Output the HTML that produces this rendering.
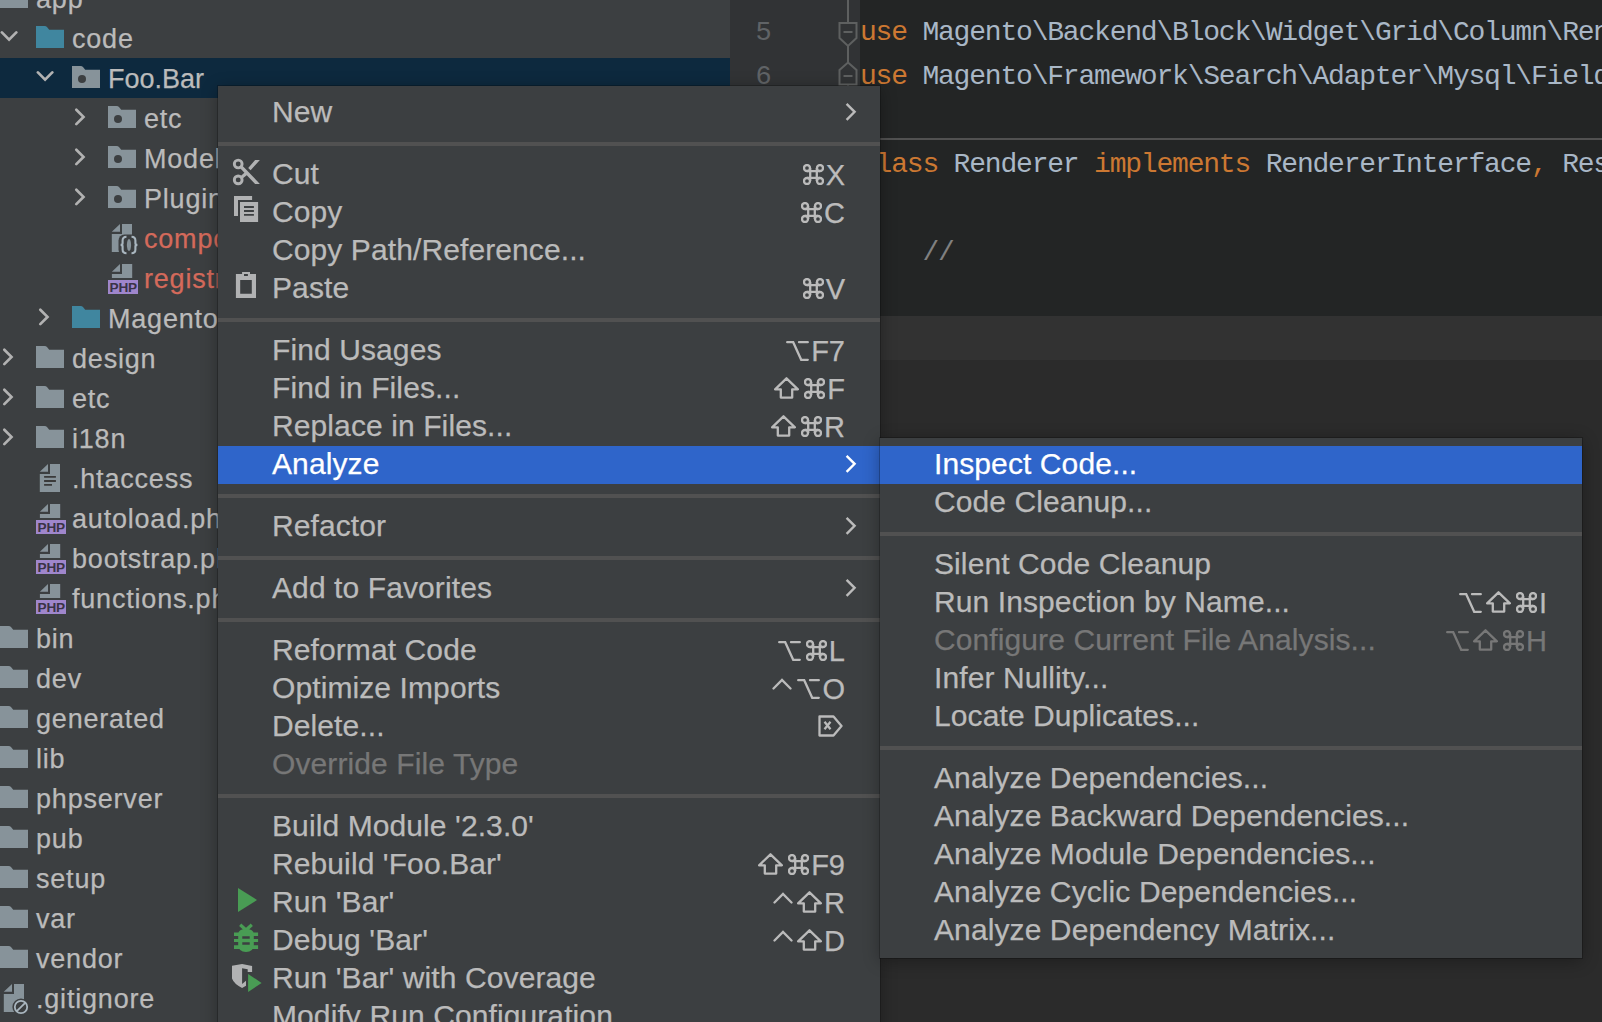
<!DOCTYPE html>
<html><head><meta charset="utf-8"><style>
html,body{margin:0;padding:0}
body{width:1602px;height:1022px;position:relative;overflow:hidden;background:#3C3F41;font-family:"Liberation Sans",sans-serif}
.t{position:absolute;white-space:pre;line-height:1;-webkit-text-stroke:0.25px currentColor}
#tree{position:absolute;left:0;top:0;width:730px;height:1022px;background:#3C3F41;overflow:hidden}
#gutter{position:absolute;left:730px;top:0;width:130px;height:1022px;background:#313335}
#editor{position:absolute;left:860px;top:0;width:742px;height:1022px;background:#2B2B2B;overflow:hidden}
.menu{position:absolute;background:#3C3F41;box-shadow:0 0 0 1px rgba(0,0,0,0.22),0 3px 16px rgba(0,0,0,0.32)}
</style></head><body>
<div id="tree"><div style="position:absolute;left:0;top:58px;width:730px;height:40px;background:#0D293E"></div><svg style="position:absolute;left:0px;top:-14px" width="28" height="22" viewBox="0 0 28 22"><path d="M0 0H8.5Q10.2 0 11.2 1.2L13.2 3.8H28V22H0Z" fill="#87939A"/></svg><div class="t" style="left:36px;top:-13.86px;font-size:27px;color:#BBBBBB;letter-spacing:0.8px;">app</div><svg style="position:absolute;left:0px;top:18px" width="20" height="40" viewBox="0 0 20 40"><path d="M1.9 14.4L9.1 21.6L16.3 14.4" fill="none" stroke="#B2B2B2" stroke-width="2.7" stroke-linecap="round"/></svg><svg style="position:absolute;left:36px;top:26px" width="28" height="22" viewBox="0 0 28 22"><path d="M0 0H8.5Q10.2 0 11.2 1.2L13.2 3.8H28V22H0Z" fill="#40869F"/></svg><div class="t" style="left:72px;top:26.14px;font-size:27px;color:#BBBBBB;letter-spacing:0.8px;">code</div><svg style="position:absolute;left:36px;top:58px" width="20" height="40" viewBox="0 0 20 40"><path d="M1.9 14.4L9.1 21.6L16.3 14.4" fill="none" stroke="#B2B2B2" stroke-width="2.7" stroke-linecap="round"/></svg><svg style="position:absolute;left:72px;top:66px" width="28" height="22" viewBox="0 0 28 22"><path d="M0 0H8.5Q10.2 0 11.2 1.2L13.2 3.8H28V22H0Z" fill="#87939A"/><circle cx="10" cy="13" r="4" fill="#3C3F41"/></svg><div class="t" style="left:108px;top:66.14px;font-size:27px;color:#BBBBBB;letter-spacing:0px;">Foo.Bar</div><svg style="position:absolute;left:72px;top:98px" width="20" height="40" viewBox="0 0 20 40"><path d="M4.3 11.7L11.5 18.9L4.3 26.1" fill="none" stroke="#B2B2B2" stroke-width="2.7" stroke-linecap="round"/></svg><svg style="position:absolute;left:108px;top:106px" width="28" height="22" viewBox="0 0 28 22"><path d="M0 0H8.5Q10.2 0 11.2 1.2L13.2 3.8H28V22H0Z" fill="#87939A"/><circle cx="10" cy="13" r="4" fill="#3C3F41"/></svg><div class="t" style="left:144px;top:106.14px;font-size:27px;color:#BBBBBB;letter-spacing:0.8px;">etc</div><svg style="position:absolute;left:72px;top:138px" width="20" height="40" viewBox="0 0 20 40"><path d="M4.3 11.7L11.5 18.9L4.3 26.1" fill="none" stroke="#B2B2B2" stroke-width="2.7" stroke-linecap="round"/></svg><svg style="position:absolute;left:108px;top:146px" width="28" height="22" viewBox="0 0 28 22"><path d="M0 0H8.5Q10.2 0 11.2 1.2L13.2 3.8H28V22H0Z" fill="#87939A"/><circle cx="10" cy="13" r="4" fill="#3C3F41"/></svg><div class="t" style="left:144px;top:146.14px;font-size:27px;color:#BBBBBB;letter-spacing:0.8px;">Model</div><svg style="position:absolute;left:72px;top:178px" width="20" height="40" viewBox="0 0 20 40"><path d="M4.3 11.7L11.5 18.9L4.3 26.1" fill="none" stroke="#B2B2B2" stroke-width="2.7" stroke-linecap="round"/></svg><svg style="position:absolute;left:108px;top:186px" width="28" height="22" viewBox="0 0 28 22"><path d="M0 0H8.5Q10.2 0 11.2 1.2L13.2 3.8H28V22H0Z" fill="#87939A"/><circle cx="10" cy="13" r="4" fill="#3C3F41"/></svg><div class="t" style="left:144px;top:186.14px;font-size:27px;color:#BBBBBB;letter-spacing:0.8px;">Plugin</div><svg style="position:absolute;left:108px;top:218px" width="32" height="40" viewBox="0 0 32 40"><path d="M3.8 13.7L12 5.9V13.7Z M14 5.9H24V33.9H3.8V15.9H14Z" fill="#87939A"/><rect x="10.5" y="16.5" width="21" height="21" rx="6" fill="#3C3F41"/><path d="M18.5 18.8Q14.6 18.8 14.6 22.5V25.2Q14.6 26.9 12.6 26.9Q14.6 26.9 14.6 28.6V31.5Q14.6 35.2 18.5 35.2 M23.5 18.8Q27.4 18.8 27.4 22.5V25.2Q27.4 26.9 29.4 26.9Q27.4 26.9 27.4 28.6V31.5Q27.4 35.2 23.5 35.2" fill="none" stroke="#A9B6BF" stroke-width="2.1"/><ellipse cx="21" cy="27" rx="3.4" ry="7.4" fill="#3C3F41"/><ellipse cx="21" cy="27" rx="2.1" ry="6" fill="#87939A"/></svg><div class="t" style="left:144px;top:226.14px;font-size:27px;color:#D46A5B;letter-spacing:0.8px;">composer.json</div><svg style="position:absolute;left:108px;top:258px" width="32" height="40" viewBox="0 0 32 40"><path d="M3.9 13.7L12 6V13.7Z M14 6H24.2V19.9H3.9V15.9H14Z" fill="#87939A"/><rect x="0" y="22" width="30" height="14" fill="#9F86CC"/><text x="1.6" y="33.8" font-family="Liberation Sans" font-weight="bold" font-size="13.6" letter-spacing="-0.2" fill="#3A3346">PHP</text></svg><div class="t" style="left:144px;top:266.14px;font-size:27px;color:#D46A5B;letter-spacing:0.8px;">registration.php</div><svg style="position:absolute;left:36px;top:298px" width="20" height="40" viewBox="0 0 20 40"><path d="M4.3 11.7L11.5 18.9L4.3 26.1" fill="none" stroke="#B2B2B2" stroke-width="2.7" stroke-linecap="round"/></svg><svg style="position:absolute;left:72px;top:306px" width="28" height="22" viewBox="0 0 28 22"><path d="M0 0H8.5Q10.2 0 11.2 1.2L13.2 3.8H28V22H0Z" fill="#40869F"/></svg><div class="t" style="left:108px;top:306.14px;font-size:27px;color:#BBBBBB;letter-spacing:0.8px;">Magento</div><svg style="position:absolute;left:0px;top:338px" width="20" height="40" viewBox="0 0 20 40"><path d="M4.3 11.7L11.5 18.9L4.3 26.1" fill="none" stroke="#B2B2B2" stroke-width="2.7" stroke-linecap="round"/></svg><svg style="position:absolute;left:36px;top:346px" width="28" height="22" viewBox="0 0 28 22"><path d="M0 0H8.5Q10.2 0 11.2 1.2L13.2 3.8H28V22H0Z" fill="#87939A"/></svg><div class="t" style="left:72px;top:346.14px;font-size:27px;color:#BBBBBB;letter-spacing:0.8px;">design</div><svg style="position:absolute;left:0px;top:378px" width="20" height="40" viewBox="0 0 20 40"><path d="M4.3 11.7L11.5 18.9L4.3 26.1" fill="none" stroke="#B2B2B2" stroke-width="2.7" stroke-linecap="round"/></svg><svg style="position:absolute;left:36px;top:386px" width="28" height="22" viewBox="0 0 28 22"><path d="M0 0H8.5Q10.2 0 11.2 1.2L13.2 3.8H28V22H0Z" fill="#87939A"/></svg><div class="t" style="left:72px;top:386.14px;font-size:27px;color:#BBBBBB;letter-spacing:0.8px;">etc</div><svg style="position:absolute;left:0px;top:418px" width="20" height="40" viewBox="0 0 20 40"><path d="M4.3 11.7L11.5 18.9L4.3 26.1" fill="none" stroke="#B2B2B2" stroke-width="2.7" stroke-linecap="round"/></svg><svg style="position:absolute;left:36px;top:426px" width="28" height="22" viewBox="0 0 28 22"><path d="M0 0H8.5Q10.2 0 11.2 1.2L13.2 3.8H28V22H0Z" fill="#87939A"/></svg><div class="t" style="left:72px;top:426.14px;font-size:27px;color:#BBBBBB;letter-spacing:0.8px;">i18n</div><svg style="position:absolute;left:36px;top:458px" width="32" height="40" viewBox="0 0 32 40"><path d="M3.8 13.7L12 5.9V13.7Z M14 5.9H24V33.9H3.8V15.9H14Z" fill="#87939A"/><path d="M8.1 18.9H19.9 M8.1 23H19.9 M8.1 26.9H16" stroke="#3A3A3A" stroke-width="1.8"/></svg><div class="t" style="left:72px;top:466.14px;font-size:27px;color:#BBBBBB;letter-spacing:0.8px;">.htaccess</div><svg style="position:absolute;left:36px;top:498px" width="32" height="40" viewBox="0 0 32 40"><path d="M3.9 13.7L12 6V13.7Z M14 6H24.2V19.9H3.9V15.9H14Z" fill="#87939A"/><rect x="0" y="22" width="30" height="14" fill="#9F86CC"/><text x="1.6" y="33.8" font-family="Liberation Sans" font-weight="bold" font-size="13.6" letter-spacing="-0.2" fill="#3A3346">PHP</text></svg><div class="t" style="left:72px;top:506.14px;font-size:27px;color:#BBBBBB;letter-spacing:0.8px;">autoload.php</div><svg style="position:absolute;left:36px;top:538px" width="32" height="40" viewBox="0 0 32 40"><path d="M3.9 13.7L12 6V13.7Z M14 6H24.2V19.9H3.9V15.9H14Z" fill="#87939A"/><rect x="0" y="22" width="30" height="14" fill="#9F86CC"/><text x="1.6" y="33.8" font-family="Liberation Sans" font-weight="bold" font-size="13.6" letter-spacing="-0.2" fill="#3A3346">PHP</text></svg><div class="t" style="left:72px;top:546.14px;font-size:27px;color:#BBBBBB;letter-spacing:0.8px;">bootstrap.php</div><svg style="position:absolute;left:36px;top:578px" width="32" height="40" viewBox="0 0 32 40"><path d="M3.9 13.7L12 6V13.7Z M14 6H24.2V19.9H3.9V15.9H14Z" fill="#87939A"/><rect x="0" y="22" width="30" height="14" fill="#9F86CC"/><text x="1.6" y="33.8" font-family="Liberation Sans" font-weight="bold" font-size="13.6" letter-spacing="-0.2" fill="#3A3346">PHP</text></svg><div class="t" style="left:72px;top:586.14px;font-size:27px;color:#BBBBBB;letter-spacing:0.8px;">functions.php</div><svg style="position:absolute;left:0px;top:626px" width="28" height="22" viewBox="0 0 28 22"><path d="M0 0H8.5Q10.2 0 11.2 1.2L13.2 3.8H28V22H0Z" fill="#87939A"/></svg><div class="t" style="left:36px;top:626.14px;font-size:27px;color:#BBBBBB;letter-spacing:0.8px;">bin</div><svg style="position:absolute;left:0px;top:666px" width="28" height="22" viewBox="0 0 28 22"><path d="M0 0H8.5Q10.2 0 11.2 1.2L13.2 3.8H28V22H0Z" fill="#87939A"/></svg><div class="t" style="left:36px;top:666.14px;font-size:27px;color:#BBBBBB;letter-spacing:0.8px;">dev</div><svg style="position:absolute;left:0px;top:706px" width="28" height="22" viewBox="0 0 28 22"><path d="M0 0H8.5Q10.2 0 11.2 1.2L13.2 3.8H28V22H0Z" fill="#87939A"/></svg><div class="t" style="left:36px;top:706.14px;font-size:27px;color:#BBBBBB;letter-spacing:0.8px;">generated</div><svg style="position:absolute;left:0px;top:746px" width="28" height="22" viewBox="0 0 28 22"><path d="M0 0H8.5Q10.2 0 11.2 1.2L13.2 3.8H28V22H0Z" fill="#87939A"/></svg><div class="t" style="left:36px;top:746.14px;font-size:27px;color:#BBBBBB;letter-spacing:0.8px;">lib</div><svg style="position:absolute;left:0px;top:786px" width="28" height="22" viewBox="0 0 28 22"><path d="M0 0H8.5Q10.2 0 11.2 1.2L13.2 3.8H28V22H0Z" fill="#87939A"/></svg><div class="t" style="left:36px;top:786.14px;font-size:27px;color:#BBBBBB;letter-spacing:0.8px;">phpserver</div><svg style="position:absolute;left:0px;top:826px" width="28" height="22" viewBox="0 0 28 22"><path d="M0 0H8.5Q10.2 0 11.2 1.2L13.2 3.8H28V22H0Z" fill="#87939A"/></svg><div class="t" style="left:36px;top:826.14px;font-size:27px;color:#BBBBBB;letter-spacing:0.8px;">pub</div><svg style="position:absolute;left:0px;top:866px" width="28" height="22" viewBox="0 0 28 22"><path d="M0 0H8.5Q10.2 0 11.2 1.2L13.2 3.8H28V22H0Z" fill="#87939A"/></svg><div class="t" style="left:36px;top:866.14px;font-size:27px;color:#BBBBBB;letter-spacing:0.8px;">setup</div><svg style="position:absolute;left:0px;top:906px" width="28" height="22" viewBox="0 0 28 22"><path d="M0 0H8.5Q10.2 0 11.2 1.2L13.2 3.8H28V22H0Z" fill="#87939A"/></svg><div class="t" style="left:36px;top:906.14px;font-size:27px;color:#BBBBBB;letter-spacing:0.8px;">var</div><svg style="position:absolute;left:0px;top:946px" width="28" height="22" viewBox="0 0 28 22"><path d="M0 0H8.5Q10.2 0 11.2 1.2L13.2 3.8H28V22H0Z" fill="#87939A"/></svg><div class="t" style="left:36px;top:946.14px;font-size:27px;color:#BBBBBB;letter-spacing:0.8px;">vendor</div><svg style="position:absolute;left:0px;top:978px" width="32" height="40" viewBox="0 0 32 40"><path d="M3.8 13.7L12 5.9V13.7Z M14 5.9H24V33.9H3.8V15.9H14Z" fill="#87939A"/><circle cx="21" cy="29" r="8.6" fill="#3C3F41"/><circle cx="21" cy="29" r="6.2" fill="none" stroke="#A9B6BF" stroke-width="1.8"/><path d="M16.8 33.2L25.2 24.8" stroke="#A9B6BF" stroke-width="1.8"/></svg><div class="t" style="left:36px;top:986.14px;font-size:27px;color:#BBBBBB;letter-spacing:0.8px;">.gitignore</div></div><div id="gutter"></div><div id="editor"><div style="position:absolute;left:0;top:0;width:742px;height:316px;background:#232525"></div><div style="position:absolute;left:0;top:316px;width:742px;height:44px;background:#323232"></div><div style="position:absolute;left:0;top:138px;width:742px;height:2px;background:#515151"></div></div><div class="t" style="left:860px;top:18.54px;font-size:28px;color:#A9B7C6;letter-spacing:-1.2px;font-family:'Liberation Mono', monospace;-webkit-text-stroke:0;"><span style="color:#CC7832">use</span> Magento\Backend\Block\Widget\Grid\Column\Renderer\AbstractRenderer;</div><div class="t" style="left:860px;top:62.54px;font-size:28px;color:#A9B7C6;letter-spacing:-1.2px;font-family:'Liberation Mono', monospace;-webkit-text-stroke:0;"><span style="color:#CC7832">use</span> Magento\Framework\Search\Adapter\Mysql\Field\Resolver;</div><div class="t" style="left:860px;top:150.54px;font-size:28px;color:#A9B7C6;letter-spacing:-1.2px;font-family:'Liberation Mono', monospace;-webkit-text-stroke:0;"><span style="color:#CC7832">class</span> Renderer <span style="color:#CC7832">implements</span> RendererInterface<span style="color:#CC7832">,</span> ResolverInterface</div><div class="t" style="left:860px;top:238.54px;font-size:28px;color:#A9B7C6;letter-spacing:-1.2px;font-family:'Liberation Mono', monospace;-webkit-text-stroke:0;">    <span style="color:#808080">//</span></div><div class="t" style="left:755.5px;top:19.80px;font-size:27px;color:#606366;letter-spacing:0px;font-family:'Liberation Mono', monospace;-webkit-text-stroke:0;">5</div><div class="t" style="left:755.5px;top:63.80px;font-size:27px;color:#606366;letter-spacing:0px;font-family:'Liberation Mono', monospace;-webkit-text-stroke:0;">6</div><svg style="position:absolute;left:836px;top:0px" width="24" height="86" viewBox="0 0 24 86"><path d="M12 0V23 M3.5 23H20.5V38L12 46L3.5 38Z M12 46V62.5 M12 62.5L20.5 70V84.5H3.5V70Z M12 84.5V86" fill="none" stroke="#5E6060" stroke-width="2"/><path d="M7.5 32H16.5 M7.5 76H16.5" stroke="#5E6060" stroke-width="2"/></svg><div class="menu" style="left:218px;top:86px;width:662px;height:956px"></div><div class="t" style="left:272px;top:96.61px;font-size:30px;color:#BBBBBB;letter-spacing:0.1px;">New</div><svg style="position:absolute;left:845px;top:102px" width="12" height="20" viewBox="0 0 12 20"><path d="M1.6 1.8L9.6 9.8L1.6 17.8" fill="none" stroke="#BBBBBB" stroke-width="2.4"/></svg><div style="position:absolute;left:218px;top:142px;width:662px;height:4px;background:#515151"></div><svg style="position:absolute;left:228px;top:154px" width="36" height="36" viewBox="0 0 36 36"><g fill="none" stroke="#B1B2B3" stroke-width="2.9"><circle cx="10.2" cy="10" r="3.9"/><circle cx="10.2" cy="25.9" r="3.9"/></g><path d="M14.2 11.6L31.9 29.9H27.1L12.4 14.6Z M27.1 6H31.9L22.6 16.3L20.2 13.9Z M12.6 22.3L16.6 18.5L19 20.9L14.6 24.5Z" fill="#B1B2B3"/></svg><div class="t" style="left:272px;top:158.60px;font-size:30px;color:#BBBBBB;letter-spacing:0.1px;">Cut</div><div style="position:absolute;right:757px;top:164px;height:21px;display:flex;flex-direction:row;color:#BBBBBB"><span style="margin-left:5px;align-self:flex-end;margin-bottom:0px"><svg width="21" height="21" viewBox="0 0 21 21" style="display:block"><g fill="none" stroke="#BBBBBB" stroke-width="2.3"><circle cx="4" cy="4" r="3"/><circle cx="17" cy="4" r="3"/><circle cx="4" cy="17" r="3"/><circle cx="17" cy="17" r="3"/><path d="M7.2 4V17 M13.8 4V17 M4 7.2H17 M4 13.8H17"/></g></svg></span><span style="margin-left:2px;font-size:29px;line-height:20px;height:20px;display:block;align-self:flex-end;-webkit-text-stroke:0.25px currentColor">X</span></div><svg style="position:absolute;left:228px;top:192px" width="36" height="36" viewBox="0 0 36 36"><path d="M6 3.9H24.1V7.9H10V24H6Z M12 9.9H30.1V30.1H12Z" fill="#B1B2B3"/><path d="M16 15H25.9 M16 19H25.9 M16 22.9H25.9" stroke="#3C3F41" stroke-width="1.8"/></svg><div class="t" style="left:272px;top:196.60px;font-size:30px;color:#BBBBBB;letter-spacing:0.1px;">Copy</div><div style="position:absolute;right:757px;top:202px;height:21px;display:flex;flex-direction:row;color:#BBBBBB"><span style="margin-left:5px;align-self:flex-end;margin-bottom:0px"><svg width="21" height="21" viewBox="0 0 21 21" style="display:block"><g fill="none" stroke="#BBBBBB" stroke-width="2.3"><circle cx="4" cy="4" r="3"/><circle cx="17" cy="4" r="3"/><circle cx="4" cy="17" r="3"/><circle cx="17" cy="17" r="3"/><path d="M7.2 4V17 M13.8 4V17 M4 7.2H17 M4 13.8H17"/></g></svg></span><span style="margin-left:2px;font-size:29px;line-height:20px;height:20px;display:block;align-self:flex-end;-webkit-text-stroke:0.25px currentColor">C</span></div><div class="t" style="left:272px;top:234.60px;font-size:30px;color:#BBBBBB;letter-spacing:0.1px;">Copy Path/Reference...</div><svg style="position:absolute;left:228px;top:266px" width="36" height="36" viewBox="0 0 36 36"><path d="M7.9 7.9H14.1V6H22V7.9H28V32H7.9Z" fill="#B1B2B3"/><path d="M12.2 14.1H23.8V27.8H12.2Z M16 8.1H19.9V9.9H16Z" fill="#3C3F41"/></svg><div class="t" style="left:272px;top:272.61px;font-size:30px;color:#BBBBBB;letter-spacing:0.1px;">Paste</div><div style="position:absolute;right:757px;top:278px;height:21px;display:flex;flex-direction:row;color:#BBBBBB"><span style="margin-left:5px;align-self:flex-end;margin-bottom:0px"><svg width="21" height="21" viewBox="0 0 21 21" style="display:block"><g fill="none" stroke="#BBBBBB" stroke-width="2.3"><circle cx="4" cy="4" r="3"/><circle cx="17" cy="4" r="3"/><circle cx="4" cy="17" r="3"/><circle cx="17" cy="17" r="3"/><path d="M7.2 4V17 M13.8 4V17 M4 7.2H17 M4 13.8H17"/></g></svg></span><span style="margin-left:2px;font-size:29px;line-height:20px;height:20px;display:block;align-self:flex-end;-webkit-text-stroke:0.25px currentColor">V</span></div><div style="position:absolute;left:218px;top:318px;width:662px;height:4px;background:#515151"></div><div class="t" style="left:272px;top:334.61px;font-size:30px;color:#BBBBBB;letter-spacing:0.1px;">Find Usages</div><div style="position:absolute;right:757px;top:340px;height:21px;display:flex;flex-direction:row;color:#BBBBBB"><span style="margin-left:5px;align-self:flex-end"><svg width="23" height="20" viewBox="0 0 23 20" style="display:block"><path d="M1.2 1.2H7.2L15.2 18.8H21.8 M13 1.2H21.8" fill="none" stroke="#BBBBBB" stroke-width="2.3" stroke-linecap="round"/></svg></span><span style="margin-left:2px;font-size:29px;line-height:20px;height:20px;display:block;align-self:flex-end;-webkit-text-stroke:0.25px currentColor">F7</span></div><div class="t" style="left:272px;top:372.61px;font-size:30px;color:#BBBBBB;letter-spacing:0.1px;">Find in Files...</div><div style="position:absolute;right:757px;top:378px;height:21px;display:flex;flex-direction:row;color:#BBBBBB"><span style="margin-left:4px;align-self:flex-end"><svg width="25" height="22" viewBox="0 0 25 22" style="display:block"><path d="M12.5 1.3L23.9 12.3H18.2V20.6H6.8V12.3H1.1Z" fill="none" stroke="#BBBBBB" stroke-width="2.3" stroke-linejoin="round"/></svg></span><span style="margin-left:5px;align-self:flex-end;margin-bottom:0px"><svg width="21" height="21" viewBox="0 0 21 21" style="display:block"><g fill="none" stroke="#BBBBBB" stroke-width="2.3"><circle cx="4" cy="4" r="3"/><circle cx="17" cy="4" r="3"/><circle cx="4" cy="17" r="3"/><circle cx="17" cy="17" r="3"/><path d="M7.2 4V17 M13.8 4V17 M4 7.2H17 M4 13.8H17"/></g></svg></span><span style="margin-left:2px;font-size:29px;line-height:20px;height:20px;display:block;align-self:flex-end;-webkit-text-stroke:0.25px currentColor">F</span></div><div class="t" style="left:272px;top:410.61px;font-size:30px;color:#BBBBBB;letter-spacing:0.1px;">Replace in Files...</div><div style="position:absolute;right:757px;top:416px;height:21px;display:flex;flex-direction:row;color:#BBBBBB"><span style="margin-left:4px;align-self:flex-end"><svg width="25" height="22" viewBox="0 0 25 22" style="display:block"><path d="M12.5 1.3L23.9 12.3H18.2V20.6H6.8V12.3H1.1Z" fill="none" stroke="#BBBBBB" stroke-width="2.3" stroke-linejoin="round"/></svg></span><span style="margin-left:5px;align-self:flex-end;margin-bottom:0px"><svg width="21" height="21" viewBox="0 0 21 21" style="display:block"><g fill="none" stroke="#BBBBBB" stroke-width="2.3"><circle cx="4" cy="4" r="3"/><circle cx="17" cy="4" r="3"/><circle cx="4" cy="17" r="3"/><circle cx="17" cy="17" r="3"/><path d="M7.2 4V17 M13.8 4V17 M4 7.2H17 M4 13.8H17"/></g></svg></span><span style="margin-left:2px;font-size:29px;line-height:20px;height:20px;display:block;align-self:flex-end;-webkit-text-stroke:0.25px currentColor">R</span></div><div style="position:absolute;left:218px;top:446px;width:662px;height:38px;background:#2F65CA"></div><div class="t" style="left:272px;top:448.61px;font-size:30px;color:#FFFFFF;letter-spacing:0.1px;">Analyze</div><svg style="position:absolute;left:845px;top:454px" width="12" height="20" viewBox="0 0 12 20"><path d="M1.6 1.8L9.6 9.8L1.6 17.8" fill="none" stroke="#FFFFFF" stroke-width="2.4"/></svg><div style="position:absolute;left:218px;top:494px;width:662px;height:4px;background:#515151"></div><div class="t" style="left:272px;top:510.61px;font-size:30px;color:#BBBBBB;letter-spacing:0.1px;">Refactor</div><svg style="position:absolute;left:845px;top:516px" width="12" height="20" viewBox="0 0 12 20"><path d="M1.6 1.8L9.6 9.8L1.6 17.8" fill="none" stroke="#BBBBBB" stroke-width="2.4"/></svg><div style="position:absolute;left:218px;top:556px;width:662px;height:4px;background:#515151"></div><div class="t" style="left:272px;top:572.61px;font-size:30px;color:#BBBBBB;letter-spacing:0.1px;">Add to Favorites</div><svg style="position:absolute;left:845px;top:578px" width="12" height="20" viewBox="0 0 12 20"><path d="M1.6 1.8L9.6 9.8L1.6 17.8" fill="none" stroke="#BBBBBB" stroke-width="2.4"/></svg><div style="position:absolute;left:218px;top:618px;width:662px;height:4px;background:#515151"></div><div class="t" style="left:272px;top:634.61px;font-size:30px;color:#BBBBBB;letter-spacing:0.1px;">Reformat Code</div><div style="position:absolute;right:757px;top:640px;height:21px;display:flex;flex-direction:row;color:#BBBBBB"><span style="margin-left:5px;align-self:flex-end"><svg width="23" height="20" viewBox="0 0 23 20" style="display:block"><path d="M1.2 1.2H7.2L15.2 18.8H21.8 M13 1.2H21.8" fill="none" stroke="#BBBBBB" stroke-width="2.3" stroke-linecap="round"/></svg></span><span style="margin-left:5px;align-self:flex-end;margin-bottom:0px"><svg width="21" height="21" viewBox="0 0 21 21" style="display:block"><g fill="none" stroke="#BBBBBB" stroke-width="2.3"><circle cx="4" cy="4" r="3"/><circle cx="17" cy="4" r="3"/><circle cx="4" cy="17" r="3"/><circle cx="17" cy="17" r="3"/><path d="M7.2 4V17 M13.8 4V17 M4 7.2H17 M4 13.8H17"/></g></svg></span><span style="margin-left:2px;font-size:29px;line-height:20px;height:20px;display:block;align-self:flex-end;-webkit-text-stroke:0.25px currentColor">L</span></div><div class="t" style="left:272px;top:672.61px;font-size:30px;color:#BBBBBB;letter-spacing:0.1px;">Optimize Imports</div><div style="position:absolute;right:757px;top:678px;height:21px;display:flex;flex-direction:row;color:#BBBBBB"><span style="margin-left:5px;align-self:flex-start;margin-top:0px"><svg width="20" height="12" viewBox="0 0 20 12" style="display:block"><path d="M1.5 10.5L10 2L18.5 10.5" fill="none" stroke="#BBBBBB" stroke-width="2.3" stroke-linecap="round"/></svg></span><span style="margin-left:5px;align-self:flex-end"><svg width="23" height="20" viewBox="0 0 23 20" style="display:block"><path d="M1.2 1.2H7.2L15.2 18.8H21.8 M13 1.2H21.8" fill="none" stroke="#BBBBBB" stroke-width="2.3" stroke-linecap="round"/></svg></span><span style="margin-left:2px;font-size:29px;line-height:20px;height:20px;display:block;align-self:flex-end;-webkit-text-stroke:0.25px currentColor">O</span></div><div class="t" style="left:272px;top:710.61px;font-size:30px;color:#BBBBBB;letter-spacing:0.1px;">Delete...</div><div style="position:absolute;right:757px;top:716px;height:21px;display:flex;flex-direction:row;color:#BBBBBB"><span style="margin-left:5px;margin-right:2px;align-self:flex-end"><svg width="25" height="22" viewBox="0 0 25 22" style="display:block"><path d="M1.5 1.5H15.5L23.5 11L15.5 20.5H1.5Z M6.5 6.8L12.5 14.2 M12.5 6.8L6.5 14.2" fill="none" stroke="#BBBBBB" stroke-width="2.3" stroke-linejoin="round"/></svg></span></div><div class="t" style="left:272px;top:748.61px;font-size:30px;color:#777777;letter-spacing:0.1px;">Override File Type</div><div style="position:absolute;left:218px;top:794px;width:662px;height:4px;background:#515151"></div><div class="t" style="left:272px;top:810.61px;font-size:30px;color:#BBBBBB;letter-spacing:0.1px;">Build Module '2.3.0'</div><div class="t" style="left:272px;top:848.61px;font-size:30px;color:#BBBBBB;letter-spacing:0.1px;">Rebuild 'Foo.Bar'</div><div style="position:absolute;right:757px;top:854px;height:21px;display:flex;flex-direction:row;color:#BBBBBB"><span style="margin-left:4px;align-self:flex-end"><svg width="25" height="22" viewBox="0 0 25 22" style="display:block"><path d="M12.5 1.3L23.9 12.3H18.2V20.6H6.8V12.3H1.1Z" fill="none" stroke="#BBBBBB" stroke-width="2.3" stroke-linejoin="round"/></svg></span><span style="margin-left:5px;align-self:flex-end;margin-bottom:0px"><svg width="21" height="21" viewBox="0 0 21 21" style="display:block"><g fill="none" stroke="#BBBBBB" stroke-width="2.3"><circle cx="4" cy="4" r="3"/><circle cx="17" cy="4" r="3"/><circle cx="4" cy="17" r="3"/><circle cx="17" cy="17" r="3"/><path d="M7.2 4V17 M13.8 4V17 M4 7.2H17 M4 13.8H17"/></g></svg></span><span style="margin-left:2px;font-size:29px;line-height:20px;height:20px;display:block;align-self:flex-end;-webkit-text-stroke:0.25px currentColor">F9</span></div><svg style="position:absolute;left:237px;top:888px" width="21" height="25" viewBox="0 0 21 25"><path d="M1 0L20 12L1 24Z" fill="#499C54"/></svg><div class="t" style="left:272px;top:886.61px;font-size:30px;color:#BBBBBB;letter-spacing:0.1px;">Run 'Bar'</div><div style="position:absolute;right:757px;top:892px;height:21px;display:flex;flex-direction:row;color:#BBBBBB"><span style="margin-left:5px;align-self:flex-start;margin-top:0px"><svg width="20" height="12" viewBox="0 0 20 12" style="display:block"><path d="M1.5 10.5L10 2L18.5 10.5" fill="none" stroke="#BBBBBB" stroke-width="2.3" stroke-linecap="round"/></svg></span><span style="margin-left:4px;align-self:flex-end"><svg width="25" height="22" viewBox="0 0 25 22" style="display:block"><path d="M12.5 1.3L23.9 12.3H18.2V20.6H6.8V12.3H1.1Z" fill="none" stroke="#BBBBBB" stroke-width="2.3" stroke-linejoin="round"/></svg></span><span style="margin-left:2px;font-size:29px;line-height:20px;height:20px;display:block;align-self:flex-end;-webkit-text-stroke:0.25px currentColor">R</span></div><svg style="position:absolute;left:228px;top:920px" width="36" height="36" viewBox="0 0 36 36"><path d="M12.2 4.8L18 10L23.8 4.8" fill="none" stroke="#499C54" stroke-width="3.2"/><path d="M10.2 14Q10.5 9 18 9Q25.5 9 25.8 14V25Q25.5 31.9 18 31.9Q10.5 31.9 10.2 25Z" fill="#499C54"/><path d="M6 12.5H30.1V15.9H6Z M6 19H30.1V22H6Z M6 25.2H30.1V28.9H6Z" fill="#499C54"/><path d="M14.3 16.2H21.7V18.8H14.3Z M14.3 22.2H21.7V24.8H14.3Z" fill="#3C3F41"/></svg><div class="t" style="left:272px;top:924.61px;font-size:30px;color:#BBBBBB;letter-spacing:0.1px;">Debug 'Bar'</div><div style="position:absolute;right:757px;top:930px;height:21px;display:flex;flex-direction:row;color:#BBBBBB"><span style="margin-left:5px;align-self:flex-start;margin-top:0px"><svg width="20" height="12" viewBox="0 0 20 12" style="display:block"><path d="M1.5 10.5L10 2L18.5 10.5" fill="none" stroke="#BBBBBB" stroke-width="2.3" stroke-linecap="round"/></svg></span><span style="margin-left:4px;align-self:flex-end"><svg width="25" height="22" viewBox="0 0 25 22" style="display:block"><path d="M12.5 1.3L23.9 12.3H18.2V20.6H6.8V12.3H1.1Z" fill="none" stroke="#BBBBBB" stroke-width="2.3" stroke-linejoin="round"/></svg></span><span style="margin-left:2px;font-size:29px;line-height:20px;height:20px;display:block;align-self:flex-end;-webkit-text-stroke:0.25px currentColor">D</span></div><svg style="position:absolute;left:228px;top:960px" width="36" height="34" viewBox="0 0 36 34"><path d="M4 5.8L14.1 4L24.1 6V12H19.7V9.3L14.1 8.3V24L18 20.8V25.7L14.1 27.9Q6 24 4 18.5Z" fill="#B1B2B3"/><path d="M20.1 13.9L33.6 22.9L20.1 31.9Z" fill="#499C54"/></svg><div class="t" style="left:272px;top:962.61px;font-size:30px;color:#BBBBBB;letter-spacing:0.1px;">Run 'Bar' with Coverage</div><div class="t" style="left:272px;top:1000.61px;font-size:30px;color:#BBBBBB;letter-spacing:0.1px;">Modify Run Configuration...</div><div class="menu" style="left:880px;top:438px;width:702px;height:520px"></div><div style="position:absolute;left:880px;top:446px;width:702px;height:38px;background:#2F65CA"></div><div class="t" style="left:934px;top:448.61px;font-size:30px;color:#FFFFFF;letter-spacing:0.1px;">Inspect Code...</div><div class="t" style="left:934px;top:486.61px;font-size:30px;color:#BBBBBB;letter-spacing:0.1px;">Code Cleanup...</div><div style="position:absolute;left:880px;top:532px;width:702px;height:4px;background:#515151"></div><div class="t" style="left:934px;top:548.61px;font-size:30px;color:#BBBBBB;letter-spacing:0.1px;">Silent Code Cleanup</div><div class="t" style="left:934px;top:586.61px;font-size:30px;color:#BBBBBB;letter-spacing:0.1px;">Run Inspection by Name...</div><div style="position:absolute;right:55px;top:592px;height:21px;display:flex;flex-direction:row;color:#BBBBBB"><span style="margin-left:5px;align-self:flex-end"><svg width="23" height="20" viewBox="0 0 23 20" style="display:block"><path d="M1.2 1.2H7.2L15.2 18.8H21.8 M13 1.2H21.8" fill="none" stroke="#BBBBBB" stroke-width="2.3" stroke-linecap="round"/></svg></span><span style="margin-left:4px;align-self:flex-end"><svg width="25" height="22" viewBox="0 0 25 22" style="display:block"><path d="M12.5 1.3L23.9 12.3H18.2V20.6H6.8V12.3H1.1Z" fill="none" stroke="#BBBBBB" stroke-width="2.3" stroke-linejoin="round"/></svg></span><span style="margin-left:5px;align-self:flex-end;margin-bottom:0px"><svg width="21" height="21" viewBox="0 0 21 21" style="display:block"><g fill="none" stroke="#BBBBBB" stroke-width="2.3"><circle cx="4" cy="4" r="3"/><circle cx="17" cy="4" r="3"/><circle cx="4" cy="17" r="3"/><circle cx="17" cy="17" r="3"/><path d="M7.2 4V17 M13.8 4V17 M4 7.2H17 M4 13.8H17"/></g></svg></span><span style="margin-left:2px;font-size:29px;line-height:20px;height:20px;display:block;align-self:flex-end;-webkit-text-stroke:0.25px currentColor">I</span></div><div class="t" style="left:934px;top:624.61px;font-size:30px;color:#777777;letter-spacing:0.1px;">Configure Current File Analysis...</div><div style="position:absolute;right:55px;top:630px;height:21px;display:flex;flex-direction:row;color:#777777"><span style="margin-left:5px;align-self:flex-end"><svg width="23" height="20" viewBox="0 0 23 20" style="display:block"><path d="M1.2 1.2H7.2L15.2 18.8H21.8 M13 1.2H21.8" fill="none" stroke="#777777" stroke-width="2.3" stroke-linecap="round"/></svg></span><span style="margin-left:4px;align-self:flex-end"><svg width="25" height="22" viewBox="0 0 25 22" style="display:block"><path d="M12.5 1.3L23.9 12.3H18.2V20.6H6.8V12.3H1.1Z" fill="none" stroke="#777777" stroke-width="2.3" stroke-linejoin="round"/></svg></span><span style="margin-left:5px;align-self:flex-end;margin-bottom:0px"><svg width="21" height="21" viewBox="0 0 21 21" style="display:block"><g fill="none" stroke="#777777" stroke-width="2.3"><circle cx="4" cy="4" r="3"/><circle cx="17" cy="4" r="3"/><circle cx="4" cy="17" r="3"/><circle cx="17" cy="17" r="3"/><path d="M7.2 4V17 M13.8 4V17 M4 7.2H17 M4 13.8H17"/></g></svg></span><span style="margin-left:2px;font-size:29px;line-height:20px;height:20px;display:block;align-self:flex-end;-webkit-text-stroke:0.25px currentColor">H</span></div><div class="t" style="left:934px;top:662.61px;font-size:30px;color:#BBBBBB;letter-spacing:0.1px;">Infer Nullity...</div><div class="t" style="left:934px;top:700.61px;font-size:30px;color:#BBBBBB;letter-spacing:0.1px;">Locate Duplicates...</div><div style="position:absolute;left:880px;top:746px;width:702px;height:4px;background:#515151"></div><div class="t" style="left:934px;top:762.61px;font-size:30px;color:#BBBBBB;letter-spacing:0.1px;">Analyze Dependencies...</div><div class="t" style="left:934px;top:800.61px;font-size:30px;color:#BBBBBB;letter-spacing:0.1px;">Analyze Backward Dependencies...</div><div class="t" style="left:934px;top:838.61px;font-size:30px;color:#BBBBBB;letter-spacing:0.1px;">Analyze Module Dependencies...</div><div class="t" style="left:934px;top:876.61px;font-size:30px;color:#BBBBBB;letter-spacing:0.1px;">Analyze Cyclic Dependencies...</div><div class="t" style="left:934px;top:914.61px;font-size:30px;color:#BBBBBB;letter-spacing:0.1px;">Analyze Dependency Matrix...</div>
</body></html>
